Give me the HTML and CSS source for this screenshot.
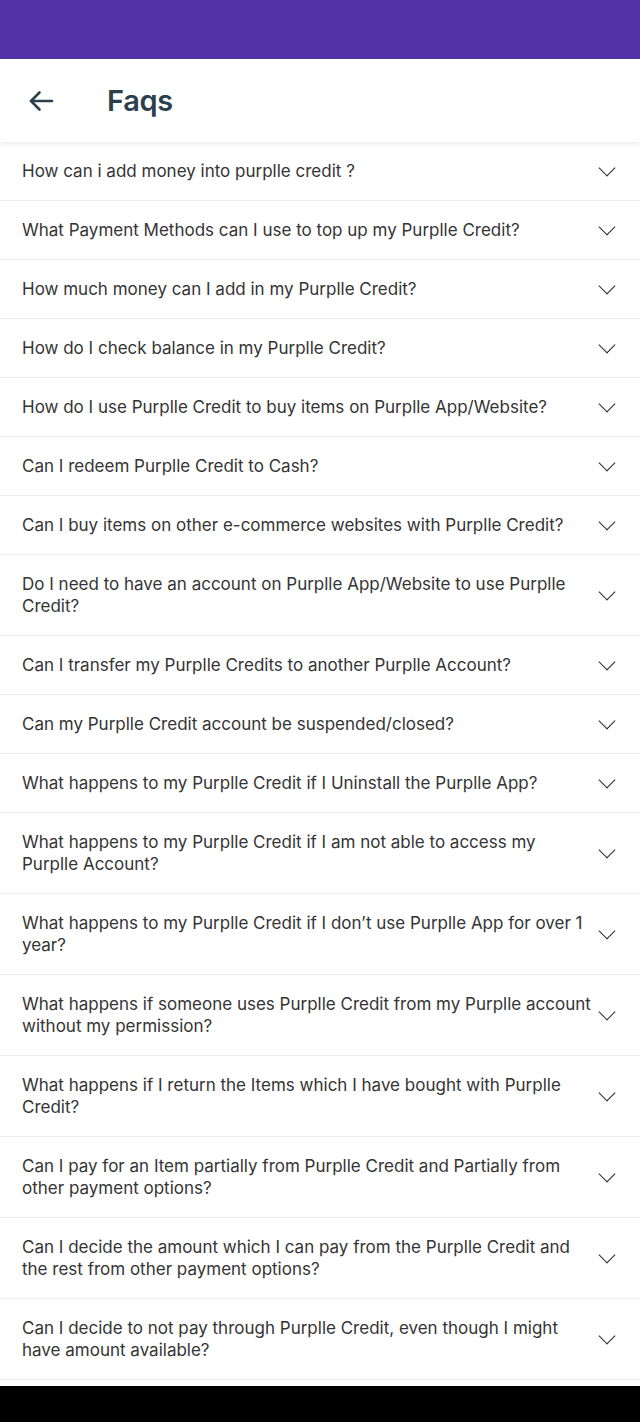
FILE: index.html
```html
<!DOCTYPE html>
<html lang="en">

<head>
  <meta charset="UTF-8">
  <meta name="viewport" content="width=device-width, initial-scale=1.0">
  <title>Faqs</title>
  <link rel="stylesheet" href="styles.css">
</head>

<body>
  <div class="status-bar"></div>

  <header class="app-bar">
    <button class="back" aria-label="Back">
      <svg width="26" height="22" viewBox="0 0 26 22" fill="none" stroke="currentColor" stroke-width="2.6"
        stroke-linecap="round" stroke-linejoin="round">
        <path d="M24 11H3" />
        <path d="M11.5 2.5L3 11l8.5 8.5" />
      </svg>
    </button>
    <h1>Faqs</h1>
  </header>

  <main>
    <ul class="faq-list">
      <li class="faq"><span>How can i add money into purplle credit ?</span><i class="chev"></i></li>
      <li class="faq"><span>What Payment Methods can I use to top up my Purplle Credit?</span><i class="chev"></i></li>
      <li class="faq"><span>How much money can I add in my Purplle Credit?</span><i class="chev"></i></li>
      <li class="faq"><span>How do I check balance in my Purplle Credit?</span><i class="chev"></i></li>
      <li class="faq"><span>How do I use Purplle Credit to buy items on Purplle App/Website?</span><i class="chev"></i></li>
      <li class="faq"><span>Can I redeem Purplle Credit to Cash?</span><i class="chev"></i></li>
      <li class="faq"><span>Can I buy items on other e-commerce websites with Purplle Credit?</span><i class="chev"></i></li>
      <li class="faq"><span>Do I need to have an account on Purplle App/Website to use Purplle Credit?</span><i class="chev"></i></li>
      <li class="faq"><span>Can I transfer my Purplle Credits to another Purplle Account?</span><i class="chev"></i></li>
      <li class="faq"><span>Can my Purplle Credit account be suspended/closed?</span><i class="chev"></i></li>
      <li class="faq"><span>What happens to my Purplle Credit if I Uninstall the Purplle App?</span><i class="chev"></i></li>
      <li class="faq"><span>What happens to my Purplle Credit if I am not able to access my Purplle Account?</span><i class="chev"></i></li>
      <li class="faq"><span>What happens to my Purplle Credit if I don’t use Purplle App for over 1 year?</span><i class="chev"></i></li>
      <li class="faq"><span>What happens if someone uses Purplle Credit from my Purplle account without my permission?</span><i class="chev"></i></li>
      <li class="faq"><span>What happens if I return the Items which I have bought with Purplle Credit?</span><i class="chev"></i></li>
      <li class="faq"><span>Can I pay for an Item partially from Purplle Credit and Partially from other payment options?</span><i class="chev"></i></li>
      <li class="faq"><span>Can I decide the amount which I can pay from the Purplle Credit and the rest from other payment options?</span><i class="chev"></i></li>
      <li class="faq"><span>Can I decide to not pay through Purplle Credit, even though I might have amount available?</span><i class="chev"></i></li>
    </ul>
  </main>

  <div class="nav-bar"></div>
</body>

</html>
```

FILE: styles.css
```css
* {
  box-sizing: border-box;
  margin: 0;
  padding: 0;
}

html,
body {
  height: 100%;
  font-family: 'Inter', 'Noto Sans', sans-serif;
  background: #fff;
  color: #333;
}

/* Top status strip */
.status-bar {
  height: 59px;
  background-color: #5230a6;
}

/* App bar with back arrow and title */
.app-bar {
  height: 83px;
  display: flex;
  align-items: center;
  background: #fff;
  box-shadow: 0 2px 5px rgba(0, 0, 0, 0.08);
  position: relative;
  color: #2c3f4c;
}

.back {
  border: none;
  background: none;
  color: inherit;
  width: 48px;
  height: 48px;
  margin-left: 17px;
  display: flex;
  align-items: center;
  justify-content: center;
}

.app-bar h1 {
  margin-left: 42px;
  font-size: 29px;
  font-weight: 600;
  letter-spacing: -0.3px;
}

/* FAQ rows */
.faq-list {
  list-style: none;
}

.faq {
  display: flex;
  align-items: center;
  padding: 18px 24px 18px 22px;
  border-bottom: 1px solid #ececec;
  font-size: 17px;
  line-height: 22px;
  color: #343434;
}

.faq span {
  flex: 1;
  padding-right: 5px;
}

/* Down chevron drawn with two borders */
.chev {
  width: 18px;
  height: 18px;
  flex-shrink: 0;
  position: relative;
}

.chev::before {
  content: '';
  position: absolute;
  left: 3px;
  top: 0px;
  width: 11px;
  height: 11px;
  border-right: 1.6px solid #2b2b2b;
  border-bottom: 1.6px solid #2b2b2b;
  transform: rotate(45deg);
}

/* Android navigation bar */
.nav-bar {
  position: fixed;
  left: 0;
  right: 0;
  bottom: 0;
  height: 36px;
  background: #000;
}
```
